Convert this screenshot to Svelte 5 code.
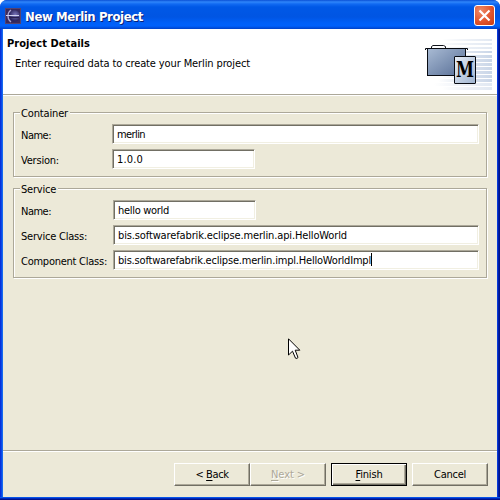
<script>
  const groups = [
    {
      title: 'Container', top: 12, height: 65, tw: 47,
      rows: [
        { label: 'Name:', lw: 30, value: 'merlin', vw: 28, x: 112, w: 367 },
        { label: 'Version:', lw: 38, value: '1.0.0', vw: 26, x: 112, w: 143 }
      ]
    },
    {
      title: 'Service', top: 11, height: 90, tw: 35,
      rows: [
        { label: 'Name:', lw: 30, value: 'hello world', vw: 51, x: 113, w: 143 },
        { label: 'Service Class:', lw: 66, value: 'bis.softwarefabrik.eclipse.merlin.api.HelloWorld', vw: 229, x: 113, w: 366 },
        { label: 'Component Class:', lw: 86, value: 'bis.softwarefabrik.eclipse.merlin.impl.HelloWorldImpl', vw: 253, x: 113, w: 366, caret: true }
      ]
    }
  ];
  const buttons = [
    { pre: '< ', key: 'B', post: 'ack', w: 33 },
    { pre: '', key: 'N', post: 'ext >', w: 34, disabled: true },
    { pre: '', key: 'F', post: 'inish', w: 27, primary: true },
    { pre: 'Cancel', key: '', post: '', w: 32 }
  ];
  const stripes = Array.from({ length: 13 }, (_, i) => i);

  // Spreads or tightens letters so a label takes its intended width.
  function fit(node, width) {
    const natural = node.getBoundingClientRect().width;
    node.style.letterSpacing = (width - natural) / node.textContent.length + 'px';
  }
</script>

<div class="window">
  <header class="titlebar">
    <svg class="appicon" width="16" height="16" viewBox="0 0 16 16">
      <defs>
        <radialGradient id="orb" cx="60%" cy="40%"><stop offset="0" stop-color="#7c77bd" /><stop offset="1" stop-color="#2c255f" /></radialGradient>
      </defs>
      <rect width="16" height="16" fill="#3a2a5c" />
      <rect x=".5" y=".5" width="15" height="15" fill="none" stroke="#56436f" />
      <circle cx="9" cy="8" r="6" fill="url(#orb)" />
      <path d="M6 2Q3 4 3 8T6 14" fill="none" stroke="#a9a4d4" stroke-width="1.3" />
      <path d="M1 7.500H14" stroke="#d0d0f0" />
      <path d="M4 9.500H14" stroke="#28204e" />
    </svg>
    <span class="caption"><span use:fit={118}>New Merlin Project</span></span>
    <button class="close" aria-label="Close">
      <svg width="21" height="21" viewBox="0 0 21 21"><path d="M5.500 5.500L15.500 15.500M15.500 5.500L5.500 15.500" stroke="#fff" stroke-width="2.200" /></svg>
    </button>
  </header>
  <main>
    <section class="banner">
      <div class="intro">
        <h1><span use:fit={83}>Project Details</span></h1>
        <p><span use:fit={235}>Enter required data to create your Merlin project</span></p>
      </div>
      <svg class="art" width="72" height="64" viewBox="420 30 72 64">
        <defs>
          <linearGradient id="fade"><stop offset="0" stop-color="#c3d1e5" stop-opacity="0" /><stop offset=".6" stop-color="#c9d5e7" stop-opacity=".75" /><stop offset="1" stop-color="#c3d1e5" /></linearGradient>
          <linearGradient id="box" x2="1" y2="1"><stop offset="0" stop-color="#a9bbd4" /><stop offset="1" stop-color="#566d95" /></linearGradient>
          <linearGradient id="card" x2="1" y2="1"><stop offset="0" stop-color="#e8eef7" /><stop offset="1" stop-color="#9fb4d0" /></linearGradient>
        </defs>
        {#each stripes as i}
          <rect x={442 - (i % 3) * 4} y={39 + i * 4} width={50 + (i % 3) * 4} height={i < 4 ? 2 : 3} fill="url(#fade)" opacity={i < 3 || i > 10 ? 0.5 : 0.9} />
        {/each}
        <path d="M431.500 48V46.500L433 45.500H443.500L445.500 46.500V48" fill="none" stroke="#10131a" />
        <rect x="427.500" y="48.500" width="38" height="27" fill="url(#box)" stroke="#080b12" />
        <path d="M425.500 50V48.500H467.500V50" fill="none" stroke="#080b12" />
        <rect x="454.500" y="56.500" width="21" height="27" rx=".5" fill="url(#card)" stroke="#080b12" />
        <text x="456" y="77" textLength="18" lengthAdjust="spacingAndGlyphs" class="monogram">M</text>
      </svg>
    </section>
    <section class="form">
      {#each groups as group}
        <fieldset style="margin-top:{group.top}px;height:{group.height}px">
          <div class="legend"><span use:fit={group.tw}>{group.title}</span></div>
          {#each group.rows as row}
            <div class="row">
              <div class="label" style="width:{row.x - 21}px"><span use:fit={row.lw}>{row.label}</span></div>
              <div class="field" style="width:{row.w}px"><span use:fit={row.vw}>{row.value}</span>{#if row.caret}<i></i>{/if}</div>
            </div>
          {/each}
        </fieldset>
      {/each}
    </section>
    <footer>
      {#each buttons as b}
        <button class="btn" class:primary={b.primary} class:disabled={b.disabled}><span use:fit={b.w}>{b.pre}<u>{b.key}</u>{b.post}</span></button>
      {/each}
    </footer>
  </main>
  <svg class="cursor" width="13" height="22" viewBox="0 0 13 22">
    <path d="M.5 .8V17L4.500 13.200L7.500 20.200Q9 21 10 19.500L7.200 12.200H11.800Z" fill="#fff" stroke="#000" />
  </svg>
</div>

<style>
  :global(body) { margin: 0; background: #fff; overflow: hidden; }
  * { box-sizing: border-box; }
  .window {
    position: relative; width: 500px; height: 500px; padding: 0 3px 3px;
    display: flex; flex-direction: column; border-radius: 7px 7px 0 0;
    background: linear-gradient(90deg, #0831d9 0 1px, #0a48e8 1px 2px, #166aee 2px 3px, #0046dd 3px 497px, #0838d8 497px 498px, #001fa8 498px 499px, #00138c 499px);
    font: 11px/14px "DejaVu Sans Condensed", "DejaVu Sans", sans-serif; font-stretch: condensed; color: #000;
    white-space: nowrap;
  }
  .window::after {
    content: ""; position: absolute; left: 0; bottom: 0; width: 500px; height: 3px;
    background: linear-gradient(#0855e8 0 1px, #0028bb 1px 2px, #00138c 2px);
  }
  .titlebar {
    height: 29px; margin: 0 -3px; padding: 2px 5px 0; display: flex; align-items: center;
    border-radius: 7px 7px 0 0;
    background: linear-gradient(#0a50d5 0, #2f86fa 2px, #116af2 4px, #0058e6 7px, #0055e3 17px, #0060f8 23px, #0061fb 26px, #004cda 28px, #0041c5 29px);
  }
  .caption {
    flex: 1; margin: 2px 0 0 4px; font: bold 13px/18px "DejaVu Sans Condensed", "DejaVu Sans", sans-serif;
    font-stretch: condensed; color: #fff; text-shadow: 1px 1px #0a1f75;
  }
  .close {
    width: 21px; height: 21px; margin-top: -1px; padding: 0; border: 1px solid #fff; border-radius: 3px;
    background: radial-gradient(circle at 30% 25%, #ee8a68, #e1552e 55%, #c63b12);
  }
  .close svg { display: block; margin: -1px; }
  main { flex: 1; background: #ece9d8; display: flex; flex-direction: column; }
  .banner { height: 65px; background: #fff; display: flex; justify-content: space-between; padding-right: 5px; }
  .art { margin-top: 1px; }
  .monogram { font: bold 21.500px "DejaVu Serif", serif; fill: #000; }
  .intro { padding: 8px 0 0 4px; }
  h1 { margin: 0; font: bold 11px/14px "DejaVu Sans Condensed", "DejaVu Sans", sans-serif; font-stretch: condensed; }
  p { margin: 6px 0 0 8px; }
  .form { flex: 1; border-top: 1px solid #aca899; box-shadow: inset 0 1px #fff; padding: 5px 0 0 10px; display: flex; flex-direction: column; }
  fieldset {
    min-width: 0; width: 474px; flex: none; margin: 0; padding: 0 0 0 7px;
    border: 1px solid #aca899; box-shadow: 1px 1px #fff, inset 1px 1px #fff;
  }
  .legend { width: max-content; height: 14px; margin: -7px 0 4px -1px; padding: 1px 2px 0 1px; background: #ece9d8; }
  .row { height: 20px; margin-bottom: 5px; display: flex; }
  .label { padding-top: 5px; }
  .field {
    height: 20px; padding: 3px 0 0 4px; background: #fff; display: flex;
    border: 1px solid; border-color: #aca899 #fff #fff #aca899;
    box-shadow: inset 1px 1px #716f64, inset -1px -1px #f1efe2;
  }
  .field i { width: 1px; height: 13px; margin-top: -1px; background: #000; }
  footer {
    height: 47px; border-top: 1px solid #aca899; box-shadow: inset 0 1px #fff;
    padding: 12px 9px 0 0; display: flex; justify-content: flex-end;
  }
  .btn {
    width: 76px; height: 23px; padding: 0; border: 1px solid; border-color: #fff #716f64 #716f64 #fff;
    background: #ece9d8; box-shadow: inset -1px -1px #aca899; color: #000; font: inherit; white-space: pre;
    line-height: 18px;
  }
  .btn u { text-underline-offset: 2px; text-decoration-thickness: 1px; text-decoration-skip-ink: none; }
  .primary { margin: 0 5px; border-color: #000; box-shadow: inset 1px 1px #fff, inset -1px -1px #716f64, inset -2px -2px #aca899; }
  .disabled { color: #aca899; text-shadow: 1px 1px #fff; }
  .cursor { position: absolute; left: 288px; top: 338px; }
</style>
